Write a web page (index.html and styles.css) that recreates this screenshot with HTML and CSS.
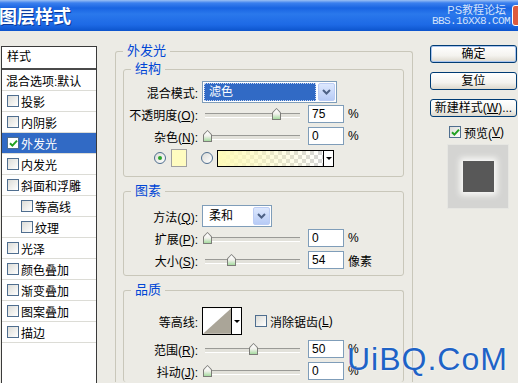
FILE: index.html
```html
<!DOCTYPE html>
<html lang="zh-CN">
<head>
<meta charset="UTF-8">
<meta name="viewport" content="width=device-width, initial-scale=1.0">
<title>图层样式</title>
<link rel="stylesheet" href="styles.css">
</head>
<body>
<div class="titlebar">
    <span class="title">图层样式</span>
    <div class="mark">
        <div class="mark-name">PS教程论坛</div>
        <div class="mark-url">BBS.16XX8.COM</div>
    </div>
    <span class="close"></span>
</div>

<div class="dialog">
    <div class="styles-list">
        <div class="list-head">样式</div>
        <div class="list-item plain">混合选项:默认</div>
        <div class="list-item"><span class="cb"></span>投影</div>
        <div class="list-item"><span class="cb"></span>内阴影</div>
        <div class="list-item selected"><span class="cb"><svg width="9" height="9" viewBox="0 0 9 9"><path d="M1 4.2l2.4 2.4L8 1.6" stroke="#21a121" stroke-width="2" fill="none"/></svg></span>外发光</div>
        <div class="list-item"><span class="cb"></span>内发光</div>
        <div class="list-item"><span class="cb"></span>斜面和浮雕</div>
        <div class="list-item sub"><span class="cb"></span>等高线</div>
        <div class="list-item sub"><span class="cb"></span>纹理</div>
        <div class="list-item"><span class="cb"></span>光泽</div>
        <div class="list-item"><span class="cb"></span>颜色叠加</div>
        <div class="list-item"><span class="cb"></span>渐变叠加</div>
        <div class="list-item"><span class="cb"></span>图案叠加</div>
        <div class="list-item"><span class="cb"></span>描边</div>
    </div>

    <fieldset class="group outer">
        <legend>外发光</legend>

        <fieldset class="group inner">
            <legend>结构</legend>
            <div class="row">
                <label>混合模式:</label>
                <div class="combo wide">
                    <span class="combo-value active">滤色</span>
                    <span class="combo-btn"><svg width="9" height="6" viewBox="0 0 9 6"><path d="M1 1l3.5 3.5L8 1" stroke="#4d6185" stroke-width="2" fill="none"/></svg></span>
                </div>
            </div>
            <div class="row">
                <label>不透明度(<u>O</u>):</label>
                <div class="slider"><span class="thumb" style="left: 70px"></span></div>
                <input class="num" type="text" value="75">
                <span class="unit">%</span>
            </div>
            <div class="row">
                <label>杂色(<u>N</u>):</label>
                <div class="slider"><span class="thumb" style="left: 1px"></span></div>
                <input class="num" type="text" value="0">
                <span class="unit">%</span>
            </div>
            <div class="color-row">
                <span class="radio on"></span>
                <span class="swatch"></span>
                <span class="radio"></span>
                <div class="gradient">
                    <span class="gradient-fill"></span>
                    <span class="gradient-btn"><span class="tri"></span></span>
                </div>
            </div>
        </fieldset>

        <fieldset class="group inner">
            <legend>图素</legend>
            <div class="row">
                <label>方法(<u>Q</u>):</label>
                <div class="combo narrow">
                    <span class="combo-value">柔和</span>
                    <span class="combo-btn"><svg width="9" height="6" viewBox="0 0 9 6"><path d="M1 1l3.5 3.5L8 1" stroke="#4d6185" stroke-width="2" fill="none"/></svg></span>
                </div>
            </div>
            <div class="row">
                <label>扩展(<u>P</u>):</label>
                <div class="slider"><span class="thumb" style="left: 1px"></span></div>
                <input class="num" type="text" value="0">
                <span class="unit">%</span>
            </div>
            <div class="row">
                <label>大小(<u>S</u>):</label>
                <div class="slider"><span class="thumb" style="left: 25px"></span></div>
                <input class="num" type="text" value="54">
                <span class="unit">像素</span>
            </div>
        </fieldset>

        <fieldset class="group inner">
            <legend>品质</legend>
            <div class="row tall">
                <label>等高线:</label>
                <div class="contour">
                    <svg class="contour-pic" width="29" height="26" viewBox="0 0 29 26"><rect width="29" height="26" fill="#fff"/><path d="M0 26L29 0V26Z" fill="#aaa598"/></svg>
                    <span class="gradient-btn"><span class="tri"></span></span>
                </div>
                <span class="aa"><span class="cb"></span>消除锯齿(<u>L</u>)</span>
            </div>
            <div class="row">
                <label>范围(<u>R</u>):</label>
                <div class="slider"><span class="thumb" style="left: 47px"></span></div>
                <input class="num" type="text" value="50">
                <span class="unit">%</span>
            </div>
            <div class="row">
                <label>抖动(<u>J</u>):</label>
                <div class="slider"><span class="thumb" style="left: 1px"></span></div>
                <input class="num" type="text" value="0">
                <span class="unit">%</span>
            </div>
        </fieldset>
    </fieldset>

    <div class="side">
        <div class="btn default">确定</div>
        <div class="btn">复位</div>
        <div class="btn">新建样式(<u>W</u>)...</div>
        <div class="preview-check"><span class="cb"><svg width="9" height="9" viewBox="0 0 9 9"><path d="M1 4.2l2.4 2.4L8 1.6" stroke="#21a121" stroke-width="2" fill="none"/></svg></span>预览(<u>V</u>)</div>
        <div class="preview"><span class="preview-box"></span></div>
    </div>
</div>

<div class="site-mark">UiBQ.CoM</div>
</body>
</html>
```

FILE: styles.css
```css
* {
    box-sizing: border-box;
}

body {
    margin: 0;
    width: 518px;
    height: 383px;
    overflow: hidden;
    position: relative;
    background-color: #ecebe5;
    font: 12px "Liberation Sans", "Noto Sans CJK SC", sans-serif;
    color: #000;
}

u {
    text-decoration: underline;
}

/* title bar */
.titlebar {
    height: 31px;
    display: flex;
    align-items: center;
    overflow: hidden;
    color: #fff;
    background: linear-gradient(#9cc0f4 0, #3b80ee 3px, #1964e2 8px, #2a78ec 45%, #1d69e5 80%, #0c54cc 100%);
}

.title {
    margin-left: -1px;
    padding-top: 2px;
    font-size: 18px;
    font-weight: bold;
    line-height: 20px;
    text-shadow: 1px 1px #0a3a9a;
}

.mark {
    margin-left: auto;
    text-align: right;
    color: #d4e2fa;
    font-size: 11px;
    line-height: 11px;
    padding-top: 1px;
}

.mark-name {
    padding-right: 4px;
}

.mark-url {
    font-family: "Liberation Mono", monospace;
    letter-spacing: -0.6px;
}

.close {
    flex-shrink: 0;
    width: 21px;
    height: 21px;
    margin-left: 2px;
    margin-right: -15px;
    background-color: #dc5a3d;
    border: 1px solid #fff;
    border-radius: 3px;
}

/* dialog body */
.dialog {
    display: flex;
    align-items: flex-start;
    padding-top: 14px;
}

.styles-list {
    flex-shrink: 0;
    width: 96px;
    height: 338px;
    margin: 1px 0 0 1px;
    background-color: #fff;
    border: 1px solid #3a3a3a;
    border-bottom: 0;
}

.list-head {
    height: 23px;
    line-height: 21px;
    padding-left: 5px;
    border-bottom: 2px solid #4a4a4a;
}

.list-item {
    display: flex;
    align-items: center;
    height: 21px;
    padding-left: 5px;
    border-bottom: 1px solid #dcdcd6;
    white-space: nowrap;
}

.list-item.plain {
    padding-left: 4px;
}

.list-item.sub {
    padding-left: 19px;
}

.list-item .cb {
    margin-right: 2px;
}

.list-item.selected {
    background-color: #316ac5;
    color: #fff;
}

.cb {
    flex-shrink: 0;
    display: flex;
    align-items: center;
    justify-content: center;
    width: 12px;
    height: 12px;
    border: 1px solid #4f6e8f;
    background: linear-gradient(135deg, #dcdcd7, #fff);
}

.selected .cb {
    background: #fff;
}

/* group boxes */
.group {
    margin: 0;
    padding: 0;
    min-width: 0;
    border: 1px solid #c9c7ba;
    border-radius: 3px;
}

.group legend {
    padding: 0 4px;
    color: #0046d5;
    font-size: 13px;
    line-height: 14px;
}

.outer {
    flex-shrink: 0;
    width: 298px;
    height: 338px;
    margin: -1px 0 0 18px;
    padding: 4px 7px 0;
    border-bottom: 0;
    border-radius: 3px 3px 0 0;
}

.inner {
    width: 281px;
    padding: 5px 0 7px;
    margin-bottom: 7px;
}

.inner legend {
    margin-left: 7px;
}

.inner + .inner {
    padding-top: 7px;
}

.inner:nth-of-type(2) {
    padding-bottom: 4px;
}

.inner:last-of-type {
    margin-bottom: 0;
    border-bottom: 0;
    padding-bottom: 0;
}

.row {
    display: flex;
    align-items: center;
    height: 22px;
    white-space: nowrap;
}

.row.tall {
    height: 34px;
}

.row label {
    flex-shrink: 0;
    width: 74px;
    margin-right: 4px;
    text-align: right;
}

.combo {
    display: flex;
    height: 22px;
    padding: 1px;
    background-color: #fff;
    border: 1px solid #7f9db9;
}

.combo.wide {
    width: 135px;
}

.combo.narrow {
    width: 70px;
}

.combo-value {
    flex: 1;
    padding-left: 5px;
    line-height: 18px;
}

.combo-value.active {
    background-color: #316ac5;
    color: #fff;
    outline: 1px dotted #c9d8f2;
    outline-offset: -1px;
}

.combo-btn {
    display: flex;
    align-items: center;
    justify-content: center;
    width: 17px;
    margin-left: 2px;
    background: linear-gradient(#dde8fe, #b7cbf6);
    border: 1px solid #bccdf5;
    border-radius: 2px;
}

/* sliders */
.slider {
    flex-shrink: 0;
    position: relative;
    width: 100px;
    height: 22px;
}

.slider::before {
    content: "";
    position: absolute;
    left: 3px;
    right: 2px;
    top: 10px;
    height: 3px;
    background-color: #e2e1da;
    border-top: 1px solid #9a9a96;
    border-bottom: 1px solid #fff;
}

.thumb {
    position: absolute;
    top: 5px;
    width: 9px;
    height: 12px;
    background-color: #7c7c78;
    clip-path: polygon(50% 0, 100% 38%, 100% 100%, 0 100%, 0 38%);
}

.thumb::after {
    content: "";
    position: absolute;
    inset: 1px;
    background: linear-gradient(#fff, #f1f1ec 50%, #a6dba0);
    clip-path: polygon(50% 0, 100% 38%, 100% 100%, 0 100%, 0 38%);
}

.num {
    flex-shrink: 0;
    width: 36px;
    height: 18px;
    margin: 0 0 0 6px;
    padding: 0 3px;
    background-color: #fff;
    border: 1px solid #7f9db9;
    font: 12px "Liberation Sans", sans-serif;
    color: #000;
}

.unit {
    margin-left: 4px;
}

/* colour row */
.color-row {
    display: flex;
    align-items: center;
    height: 22px;
    padding-left: 30px;
}

.radio {
    flex-shrink: 0;
    position: relative;
    width: 12px;
    height: 12px;
    border: 1px solid #4f6e8f;
    border-radius: 50%;
    background: linear-gradient(135deg, #dcdcd7, #fff);
}

.radio.on::after {
    content: "";
    position: absolute;
    left: 3px;
    top: 3px;
    width: 4px;
    height: 4px;
    border-radius: 50%;
    background-color: #2aa52a;
}

.swatch {
    width: 16px;
    height: 18px;
    margin: 0 14px 0 5px;
    background-color: #fffcc0;
    border: 1px solid #a0a0a0;
}

.gradient {
    display: flex;
    width: 117px;
    height: 17px;
    margin-left: 4px;
    border: 1px solid #000;
}

.gradient-fill {
    flex: 1;
    background: linear-gradient(to right, #fffbb8, rgba(255, 251, 184, 0)),
        repeating-conic-gradient(#d6d6d6 0 25%, #fff 0 50%) 0 0 / 8px 8px;
}

.gradient-btn {
    display: flex;
    align-items: center;
    justify-content: center;
    width: 10px;
    background-color: #fff;
    border-left: 1px solid #000;
}

.tri {
    border-left: 3px solid transparent;
    border-right: 3px solid transparent;
    border-top: 3px solid #000;
}

/* contour */
.contour {
    display: flex;
    width: 40px;
    height: 28px;
    border: 1px solid #000;
}

.contour-pic {
    display: block;
}

.aa {
    display: flex;
    align-items: center;
    margin-left: 13px;
}

.aa .cb {
    margin-right: 3px;
}

/* right column */
.side {
    flex-shrink: 0;
    display: flex;
    flex-direction: column;
    width: 87px;
    margin: 0 0 0 17px;
}

.btn {
    height: 18px;
    margin-bottom: 9px;
    line-height: 16px;
    text-align: center;
    white-space: nowrap;
    background: linear-gradient(#fff, #f4f3ef 60%, #dcd8cd);
    border: 1px solid #003c74;
    border-radius: 3px;
}

.btn.default {
    box-shadow: inset 0 0 0 1px #a9c4ee;
}

.preview-check {
    display: flex;
    align-items: center;
    height: 12px;
    margin-left: 19px;
    white-space: nowrap;
}

.preview-check .cb {
    margin-right: 3px;
}

.preview {
    display: flex;
    align-items: center;
    justify-content: center;
    width: 62px;
    height: 65px;
    margin: 6px 0 0 17px;
    background-color: #d4d4d2;
    border: 1px solid #e6e6e2;
}

.preview-box {
    width: 31px;
    height: 31px;
    background-color: #585858;
    box-shadow: 0 0 6px 3px #fafaf8;
}

/* site watermark over the dialog */
.site-mark {
    position: absolute;
    left: 347px;
    top: 343px;
    font: 32px/32px "Liberation Sans", sans-serif;
    letter-spacing: 1px;
    color: #1f63c6;
    text-shadow: 0 0 2px #fff;
}
```
